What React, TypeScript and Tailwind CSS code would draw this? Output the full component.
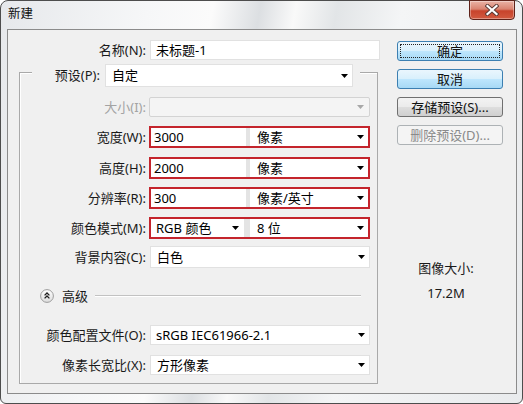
import React from "react";

const FONT = { fontFamily: '"Noto Sans", "Noto Sans CJK SC", sans-serif' };

function Arrow({ disabled }: { disabled?: boolean }) {
  return (
    <svg width="7" height="4" viewBox="0 0 7 4" className="shrink-0">
      <path d="M0 0H7L3.5 4Z" fill={disabled ? "#a8a8a8" : "#000"} />
    </svg>
  );
}

function Select({ text, className = "", pl = "pl-[6px]" }: { text: string; className?: string; pl?: string }) {
  return (
    <div className={`flex items-center justify-between h-full bg-white border border-[#e1e1e1] ${pl} pr-[4px] ${className}`}>
      <span className="leading-none whitespace-nowrap">{text}</span>
      <Arrow />
    </div>
  );
}

function Label({ children, w = "w-[126px]", disabled }: { children: React.ReactNode; w?: string; disabled?: boolean }) {
  return (
    <div className={`${w} shrink-0 text-right leading-none whitespace-nowrap ${disabled ? "text-[#a3a3a3]" : "text-[#1a1a1a]"}`}>
      {children}
    </div>
  );
}

function Btn({ children, kind }: { children: React.ReactNode; kind: "blue" | "focus" | "normal" | "disabled" }) {
  const base = "w-[106px] h-[20px] rounded-[3px] border flex items-center justify-center leading-none";
  if (kind === "disabled")
    return <div className={`${base} border-[#adb2b5] bg-[#f4f4f4] text-[#8a8a8a]`}>{children}</div>;
  if (kind === "normal")
    return (
      <div className={`${base} border-[#707070] bg-[linear-gradient(to_bottom,#f3f3f3_0%,#ebebeb_48%,#dddddd_52%,#cfcfcf_100%)] text-[#111]`}>
        {children}
      </div>
    );
  return (
    <div className={`${base} border-[#3c7fb1] bg-[linear-gradient(to_bottom,#eaf6fd_0%,#d9f0fc_48%,#bee6fd_52%,#a7d9f5_100%)] text-[#111] p-[2px]`}>
      <div className={`w-full h-full flex items-center justify-center ${kind === "focus" ? "border border-dotted border-[#222]" : ""}`}>
        {children}
      </div>
    </div>
  );
}

export default function App() {
  return (
    <div className="w-[523px] h-[404px] bg-white text-[13px]" style={FONT}>
      <div className="w-[523px] h-[404px] rounded-t-[8px] rounded-b-[6px] border border-[#4d4d4d] bg-[linear-gradient(100deg,#e6e8eb_0%,#f6f7f8_25%,#fbfbfb_36%,#dcdfe2_44%,#f9f9f9_50%,#e2e5e7_57%,#f4f5f6_68%,#e9ebed_100%)] flex flex-col">
        {/* title bar */}
        <div className="h-[28px] flex justify-between shrink-0">
          <div className="pl-[7px] pt-[7px] text-[12.5px] text-[#111] leading-none">新建</div>
          <div className="-mt-[1px] mr-[7px] w-[46px] h-[20px] rounded-b-[4px] border border-[#5e2219] bg-[linear-gradient(to_bottom,#eab3a6_0%,#d98370_45%,#c8432c_55%,#d25a40_100%)] flex items-center justify-center shadow-[inset_0_0_0_1px_rgba(255,255,255,0.35)]">
            <svg width="14" height="12" viewBox="0 0 14 12">
              <path d="M2.5 2 L11.5 10 M11.5 2 L2.5 10" stroke="#5a3a35" strokeWidth="4" strokeLinecap="square" />
              <path d="M2.5 2 L11.5 10 M11.5 2 L2.5 10" stroke="#fff" strokeWidth="2.2" strokeLinecap="square" />
            </svg>
          </div>
        </div>
        {/* panel */}
        <div className="ml-[6px] mr-[5px] mb-[9px] flex-1 border border-[#8b8b8b] bg-[#f0f0f0] flex">
          {/* left column */}
          <div className="w-[378px] shrink-0 flex flex-col">
            <div className="mt-[10px] h-[20px] flex items-center">
              <Label w="w-[138px]">名称(N):</Label>
              <div className="ml-[4px] w-[230px] h-full bg-white border border-[#e1e1e1] flex items-center pl-[5px] leading-none">
                未标题-1
              </div>
            </div>
            {/* group box */}
            <div className="mt-[12px] ml-[11px] w-[359px] border border-[#a9a9a9] shadow-[inset_1px_1px_0_#ffffff] flex flex-col pb-[8px]">
              <div className="-mt-[9px] ml-[12px] w-[328px] h-[23px] bg-[#f0f0f0] flex items-center">
                <Label w="w-[68px]">预设(P):</Label>
                <div className="ml-[5px] w-[248px] h-full">
                  <Select text="自定" />
                </div>
              </div>
              <div className="mt-[10px] h-[20px] flex items-center">
                <Label disabled>大小(I):</Label>
                <div className="ml-[3px] w-[221px] h-full bg-[#f4f4f4] border border-[#d3d3d3] rounded-[2px] flex items-center justify-end pr-[5px]">
                  <Arrow disabled />
                </div>
              </div>
              {[
                { mt: "mt-[9px]", label: "宽度(W):", v: "3000", u: "像素" },
                { mt: "mt-[9px]", label: "高度(H):", v: "2000", u: "像素" },
                { mt: "mt-[8px]", label: "分辨率(R):", v: "300", u: "像素/英寸" },
              ].map((r) => (
                <div key={r.label} className={`${r.mt} h-[22px] flex items-center`}>
                  <Label>{r.label}</Label>
                  <div className="ml-[3px] w-[221px] h-full border-2 border-[#c4242c] bg-[#e4e4e4] flex gap-[4px]">
                    <div className="w-[95px] h-full bg-white flex items-center pl-[3px] leading-none">{r.v}</div>
                    <div className="w-[118px] h-full">
                      <Select text={r.u} pl="pl-[7px]" className="border-0 pr-[3px]" />
                    </div>
                  </div>
                </div>
              ))}
              <div className="mt-[8px] h-[22px] flex items-center">
                <Label>颜色模式(M):</Label>
                <div className="ml-[3px] w-[221px] h-full border-2 border-[#c4242c] bg-[#e4e4e4] flex gap-[6px]">
                  <div className="w-[93px] h-full">
                    <Select text="RGB 颜色" pl="pl-[5px]" className="border-0 pr-[5px]" />
                  </div>
                  <div className="w-[118px] h-full">
                    <Select text="8 位" pl="pl-[7px]" className="border-0 pr-[3px]" />
                  </div>
                </div>
              </div>
              <div className="mt-[7px] h-[22px] flex items-center">
                <Label>背景内容(C):</Label>
                <div className="ml-[4px] w-[220px] h-full">
                  <Select text="白色" />
                </div>
              </div>
              <div className="mt-[20px] h-[16px] flex items-center pl-[20px] pr-[16px]">
                <svg width="14" height="14" viewBox="0 0 14 14" className="shrink-0">
                  <defs>
                    <linearGradient id="cg" x1="0" y1="0" x2="0" y2="1">
                      <stop offset="0" stopColor="#ffffff" />
                      <stop offset="1" stopColor="#dcdcdc" />
                    </linearGradient>
                  </defs>
                  <circle cx="7" cy="7" r="6.4" fill="url(#cg)" stroke="#9c9c9c" strokeWidth="1" />
                  <path d="M4.6 6.4 L7 4 L9.4 6.4 M4.6 9.4 L7 7 L9.4 9.4" stroke="#1e1e1e" strokeWidth="1.3" fill="none" />
                </svg>
                <span className="ml-[8px] leading-none text-[#1a1a1a]">高级</span>
                <div className="ml-[7px] flex-1 h-[2px] border-t border-[#c2c2c2] border-b border-b-white" />
              </div>
              <div className="mt-[21px] h-[20px] flex items-center">
                <Label>颜色配置文件(O):</Label>
                <div className="ml-[4px] w-[220px] h-full">
                  <Select text="sRGB IEC61966-2.1" pl="pl-[5px]" />
                </div>
              </div>
              <div className="mt-[10px] h-[20px] flex items-center">
                <Label>像素长宽比(X):</Label>
                <div className="ml-[4px] w-[220px] h-full">
                  <Select text="方形像素" />
                </div>
              </div>
            </div>
          </div>
          {/* right column */}
          <div className="pl-[11px] flex flex-col">
            <div className="mt-[11px]">
              <Btn kind="focus">确定</Btn>
            </div>
            <div className="mt-[8px]">
              <Btn kind="blue">取消</Btn>
            </div>
            <div className="mt-[8px]">
              <Btn kind="normal">存储预设(S)...</Btn>
            </div>
            <div className="mt-[8px]">
              <Btn kind="disabled">删除预设(D)...</Btn>
            </div>
            <div className="mt-[115px] w-[98px] h-[16px] flex items-center justify-center leading-none text-[#1a1a1a]">
              图像大小:
            </div>
            <div className="mt-[9px] w-[98px] h-[16px] flex items-center justify-center leading-none text-[#1a1a1a]">
              17.2M
            </div>
          </div>
        </div>
      </div>
    </div>
  );
}
